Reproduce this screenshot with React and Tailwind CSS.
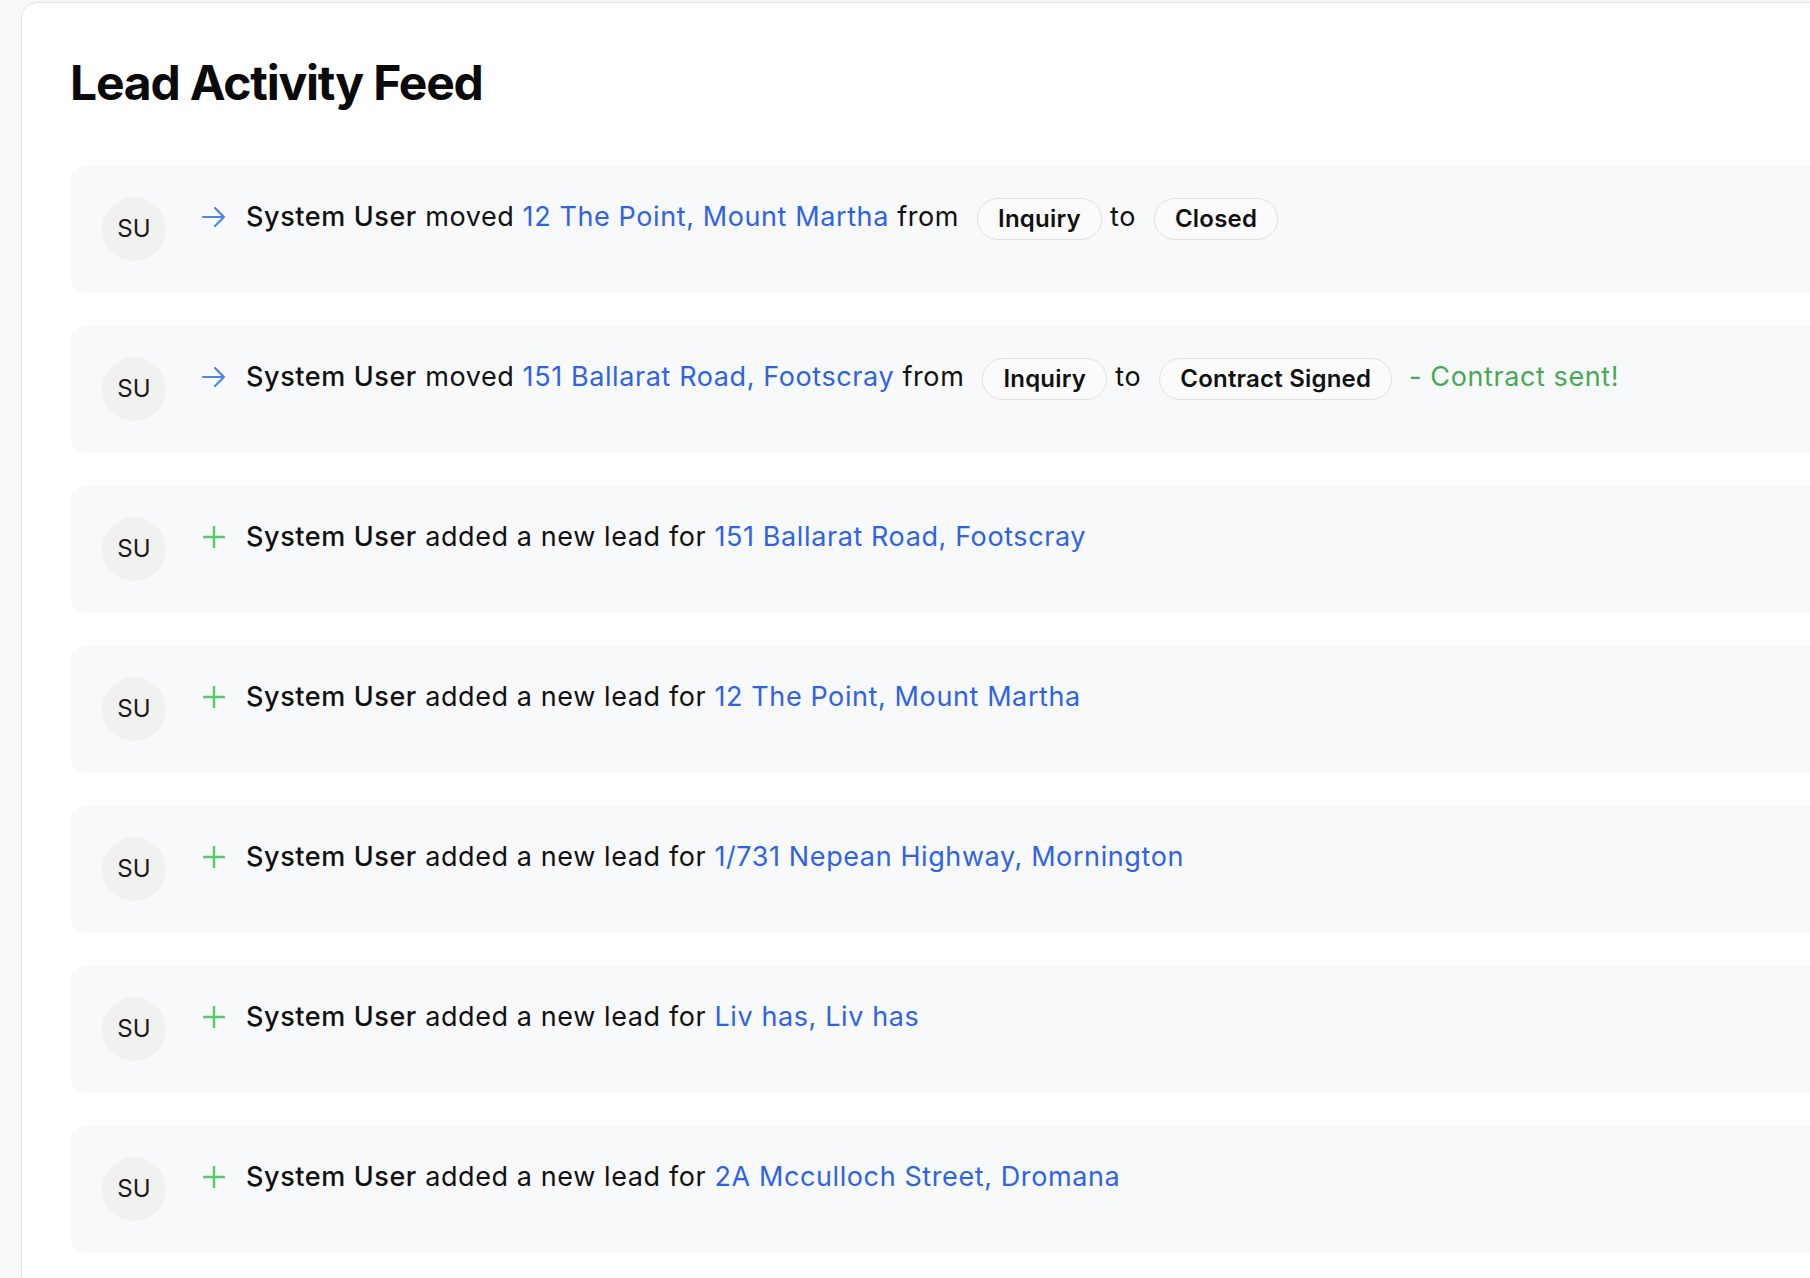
import React from "react";

const items = [
  { type: "move", place: "12 The Point, Mount Martha", from: "Inquiry", to: "Closed" },
  { type: "move", place: "151 Ballarat Road, Footscray", from: "Inquiry", to: "Contract Signed", note: "- Contract sent!" },
  { type: "add", place: "151 Ballarat Road, Footscray" },
  { type: "add", place: "12 The Point, Mount Martha" },
  { type: "add", place: "1/731 Nepean Highway, Mornington" },
  { type: "add", place: "Liv has, Liv has" },
  { type: "add", place: "2A Mcculloch Street, Dromana" },
];

function ArrowIcon() {
  return (
    <svg width="24" height="24" viewBox="0 0 24 24" fill="none" stroke="#4d84ee" strokeWidth="2.2" strokeLinecap="round" strokeLinejoin="round">
      <path d="M1 12h21M13 3l9 9-9 9" />
    </svg>
  );
}

function PlusIcon() {
  return (
    <svg width="24" height="24" viewBox="0 0 24 24" fill="none" stroke="#5bc46d" strokeWidth="2.4">
      <path d="M12 1v22M1 12h22" />
    </svg>
  );
}

function Pill({ children }) {
  return (
    <span className="inline-flex items-center h-[42px] px-5 ml-[18px] rounded-full border border-[#e3e1de] bg-[#fbfbfb] text-[24px] tracking-[0.2px] font-semibold text-[#111] align-middle">
      {children}
    </span>
  );
}

function Row({ item }) {
  return (
    <div className="flex items-start bg-[#f8f9fa] rounded-2xl p-8">
      <div className="w-16 h-16 shrink-0 rounded-full bg-[#f1f1ef] flex items-center justify-center text-[24px] text-[#1a1a1a]">
        SU
      </div>
      <div className="ml-9 h-[39px] flex items-center shrink-0">
        {item.type === "move" ? <ArrowIcon /> : <PlusIcon />}
      </div>
      <p className="ml-5 text-[27px] tracking-[0.6px] leading-[39px] text-[#111]">
        <span className="font-medium">System User</span>{" "}
        {item.type === "move" ? (
          <>
            moved <span className="text-[#2f63e6]">{item.place}</span> from
            <Pill>{item.from}</Pill> to
            <Pill>{item.to}</Pill>
            {item.note && <span className="ml-[17px] text-[#47a954]">{item.note}</span>}
          </>
        ) : (
          <>
            added a new lead for <span className="text-[#2f63e6]">{item.place}</span>
          </>
        )}
      </p>
    </div>
  );
}

export default function App() {
  return (
    <div className="min-h-screen bg-[#f8f9fa] pl-[21px] pt-[2px] overflow-hidden" style={{ fontFamily: "Inter, 'Noto Sans', sans-serif" }}>
      <div className="mr-[-40px] bg-white border border-[#e4e4e4] rounded-tl-2xl pl-12 pt-14 pb-10 min-h-[1300px]">
        <h1 className="text-[48px] leading-none font-bold tracking-tight text-[#0a0a0a] mb-[58px]">Lead Activity Feed</h1>
        <div className="flex flex-col gap-8">
          {items.map((it, i) => (
            <Row key={i} item={it} />
          ))}
        </div>
      </div>
    </div>
  );
}
